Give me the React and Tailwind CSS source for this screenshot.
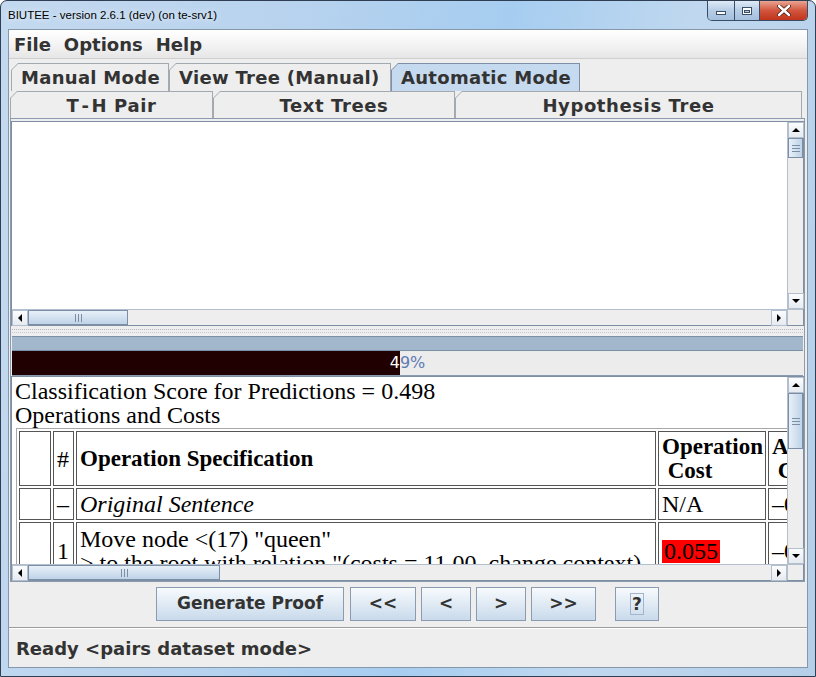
const UI = "font-['DejaVu_Sans',sans-serif]";
const SERIF = "font-['Liberation_Serif','Times_New_Roman',serif]";

const ARROWS = {
  up: { pts: "0,5 4,1 8,5", box: "0 0 8 6" },
  down: { pts: "0,1 4,5 8,1", box: "0 0 8 6" },
  left: { pts: "5,0 1,4 5,8", box: "0 0 6 8" },
  right: { pts: "1,0 5,4 1,8", box: "0 0 6 8" },
};

function ArrowBtn({ dir }) {
  const a = ARROWS[dir];
  const vert = dir === "up" || dir === "down";
  return (
    <div className="w-[16px] h-[16px] shrink-0 flex items-center justify-center bg-[linear-gradient(#fbfcfd,#e6ebf1)] border border-[#b3bfcc]">
      <svg width={vert ? 8 : 6} height={vert ? 6 : 8} viewBox={a.box}>
        <polygon points={a.pts} fill="#000" />
      </svg>
    </div>
  );
}

function VScroll({ thumb }) {
  return (
    <div className="w-[16px] shrink-0 flex flex-col bg-[#eeeeee] border-l border-[#b3bfcc]">
      <ArrowBtn dir="up" />
      <div className={`${thumb} shrink-0 border border-[#7c8ea6] bg-[linear-gradient(to_right,#e8f0f8,#bfd3e8)] flex flex-col items-center justify-center gap-[2px]`}>
        <div className="w-[8px] h-[1px] bg-[#7c8ea6]" />
        <div className="w-[8px] h-[1px] bg-[#7c8ea6]" />
        <div className="w-[8px] h-[1px] bg-[#7c8ea6]" />
      </div>
      <div className="flex-1" />
      <ArrowBtn dir="down" />
    </div>
  );
}

function HScroll({ thumb }) {
  return (
    <div className="h-[16px] shrink-0 flex bg-[#eeeeee] border-t border-[#b3bfcc]">
      <ArrowBtn dir="left" />
      <div className={`${thumb} shrink-0 border border-[#7c8ea6] bg-[linear-gradient(#e8f0f8,#bfd3e8)] flex items-center justify-center gap-[2px]`}>
        <div className="w-[1px] h-[8px] bg-[#7c8ea6]" />
        <div className="w-[1px] h-[8px] bg-[#7c8ea6]" />
        <div className="w-[1px] h-[8px] bg-[#7c8ea6]" />
      </div>
      <div className="flex-1" />
      <ArrowBtn dir="right" />
    </div>
  );
}

function Tab({ children, width, selected, center }) {
  return (
    <div
      className={`${width} h-full shrink-0 pt-[1px] px-[1px] ${
        selected ? "bg-[#7d8fa8]" : "bg-[#a4a9b0]"
      } [clip-path:polygon(7px_0,100%_0,100%_100%,0_100%,0_7px)]`}
    >
      <div
        className={`h-full flex items-center ${center ? "justify-center tracking-[0.6px]" : "pl-[9px] tracking-[0.3px]"} ${
          selected ? "bg-[#c6daef]" : "bg-[#eeeeee]"
        } [clip-path:polygon(6px_0,100%_0,100%_100%,0_100%,0_6px)] text-[18px] font-bold text-[#333333] whitespace-nowrap`}
      >
        {children}
      </div>
    </div>
  );
}

function Btn({ children, width, focus }) {
  return (
    <div
      className={`${width} h-[34px] shrink-0 flex items-center justify-center border border-[#8a9bb2] bg-[linear-gradient(#f7fafd,#c9daeb)] text-[17px] font-bold text-[#333333]`}
    >
      {focus ? (
        <span className="px-[1px] leading-[20px] border border-[#a3b4cc]">{children}</span>
      ) : (
        children
      )}
    </div>
  );
}

function TitleBar() {
  return (
    <div className="h-[28px] shrink-0 flex items-start justify-between">
      <div className="pl-[7px] pt-[6px] text-[11.5px] text-black font-['Liberation_Sans',Arial,sans-serif] [text-shadow:0_0_6px_#ffffff]">
        BIUTEE - version 2.6.1 (dev) (on te-srv1)
      </div>
      <div className="mr-[7px] flex h-[20px] border border-t-0 border-[#3b4d66] rounded-b-[5px] overflow-hidden">
        <div className="w-[27px] flex items-center justify-center bg-[linear-gradient(#dfeaf6,#b6cde6_50%,#a4c0de)] border-r border-[#3b4d66]">
          <div className="w-[10px] h-[4px] mt-[5px] bg-white border border-[#3b4d66]" />
        </div>
        <div className="w-[25px] flex items-center justify-center bg-[linear-gradient(#dfeaf6,#b6cde6_50%,#a4c0de)] border-r border-[#3b4d66]">
          <div className="w-[10px] h-[8px] border border-[#3b4d66] bg-white flex items-center justify-center">
            <div className="w-[6px] h-[3px] mt-[1px] bg-[#b6cde6] border border-[#3b4d66]" />
          </div>
        </div>
        <div className="w-[47px] flex items-center justify-center bg-[linear-gradient(#e8a592,#d2563e_50%,#c0341c)]">
          <svg width="14" height="11" viewBox="0 0 14 11">
            <path d="M2 1 L12 10 M12 1 L2 10" stroke="#4a1a10" strokeWidth="4" strokeLinecap="round" />
            <path d="M2 1 L12 10 M12 1 L2 10" stroke="#ffffff" strokeWidth="2.4" strokeLinecap="round" />
          </svg>
        </div>
      </div>
    </div>
  );
}

const cell = "border border-[#555555] px-[3px] align-middle";

function OpsTable() {
  return (
    <table className={`${SERIF} text-[24px] leading-[24px] text-black table-fixed border-separate border-spacing-[2px] border border-[#a8a8a8] w-[895px] ml-[4px] mt-[1px]`}>
      <colgroup>
        <col className="w-[32px]" />
        <col className="w-[21px]" />
        <col className="w-[580px]" />
        <col className="w-[108px]" />
        <col className="w-[140px]" />
      </colgroup>
      <tbody>
        <tr className="h-[55px]">
          <td className={cell}></td>
          <td className={`${cell} px-[2px]`}>#</td>
          <td className={`${cell} font-bold text-[23px]`}>Operation Specification</td>
          <td className={`${cell} font-bold text-[23px] whitespace-pre`}>{"Operation\n Cost"}</td>
          <td className={`${cell} font-bold text-[23px] whitespace-pre`}>{"Accumulated\n Cost"}</td>
        </tr>
        <tr className="h-[32px]">
          <td className={cell}></td>
          <td className={`${cell} px-[2px]`}>–</td>
          <td className={`${cell} italic`}>Original Sentence</td>
          <td className={cell}>N/A</td>
          <td className={cell}>–0.000</td>
        </tr>
        <tr className="h-[58px]">
          <td className={cell}></td>
          <td className={`${cell} px-[2px]`}>1</td>
          <td className={`${cell} whitespace-nowrap`}>
            Move node &lt;(17) "queen"
            <br />
            &gt; to the root with relation "(costs = 11.00, change context)
          </td>
          <td className={cell}>
            <span className="bg-[#ff0000] px-[2px] inline-block leading-[23px]">0.055</span>
          </td>
          <td className={cell}>–0.055</td>
        </tr>
      </tbody>
    </table>
  );
}

export default function App() {
  return (
    <div className={`${UI} w-[816px] h-[677px] flex flex-col border border-[#2f3e52] rounded-t-[7px] overflow-hidden bg-[linear-gradient(100deg,#c3d9ef_0%,#b9d3ee_30%,#a6cdf0_55%,#c0d8ef_75%,#b5cfe9_100%)]`}>
      <TitleBar />

      <div className="flex-1 min-h-0 mx-[7px] mb-[8px] border border-[#8797aa] bg-[#eeeeee] flex flex-col">
        {/* menu */}
        <div className="h-[29px] shrink-0 flex items-center gap-[13px] pl-[5px] border-b border-[#cfcfcf] bg-[linear-gradient(#ffffff,#f4f4f4_50%,#e6e6e6)] text-[18px] font-bold text-[#333333]">
          <span>File</span>
          <span>Options</span>
          <span>Help</span>
        </div>

        {/* tabs */}
        <div className="pt-[4px] shrink-0">
          <div className="h-[28px] flex pl-[2px]">
            <Tab width="w-[158px]">Manual Mode</Tab>
            <Tab width="w-[222px]">View Tree (Manual)</Tab>
            <Tab width="w-[189px]" selected>Automatic Mode</Tab>
          </div>
          <div className="h-[27px] flex pl-[1px]">
            <Tab width="w-[203px]" center>
              T<span className="px-[2px]">-</span>H Pair
            </Tab>
            <Tab width="w-[242px]" center>Text Trees</Tab>
            <Tab width="w-[347px]" center>Hypothesis Tree</Tab>
          </div>
        </div>

        {/* content panel */}
        <div className="h-[464px] shrink-0 ml-[1px] mr-[2px] border border-[#8a9bb0] flex flex-col overflow-hidden">
          <div className="mt-[2px] h-[205px] shrink-0 border border-[#7f8fa3] flex flex-col">
            <div className="flex-1 flex min-h-0">
              <div className="flex-1 bg-white" />
              <VScroll thumb="h-[20px]" />
            </div>
            <div className="flex">
              <div className="flex-1">
                <HScroll thumb="w-[100px]" />
              </div>
              <div className="w-[16px] h-[16px] bg-[#eeeeee] border-t border-l border-[#b3bfcc]" />
            </div>
          </div>

          {/* split divider */}
          <div className="h-[10px] shrink-0 flex flex-col justify-center gap-[2px] px-[1px]">
            <div className="border-t border-dotted border-[#b4b8bd]" />
            <div className="border-t border-dotted border-[#c4c8cc]" />
          </div>

          {/* progress */}
          <div className="h-[15px] shrink-0 mx-[1px] bg-[#a3b7cc] border-y border-[#7b8fa6]" />
          <div className="h-[25px] shrink-0 mx-[1px] relative bg-[#ececec] border-b border-[#8a9bb0] text-[16px] leading-[24px] text-[#5f7bb4]">
            <div className="text-center">49%</div>
            <div className="absolute left-0 top-0 bottom-0 w-[388px] overflow-hidden bg-[#200000]">
              <div className="w-[791px] text-center text-white">49%</div>
            </div>
          </div>

          {/* lower pane */}
          <div className="flex-1 min-h-0 border border-[#7f8fa3] flex flex-col">
            <div className="flex-1 flex min-h-0">
              <div className="flex-1 min-w-0 bg-white overflow-hidden">
                <div className={`${SERIF} text-[24px] leading-[24px] text-black pt-[2px] pl-[3px] whitespace-nowrap`}>
                  <div>Classification Score for Predictions = 0.498</div>
                  <div>Operations and Costs</div>
                </div>
                <OpsTable />
              </div>
              <VScroll thumb="h-[56px]" />
            </div>
            <div className="flex shrink-0">
              <div className="flex-1">
                <HScroll thumb="w-[192px]" />
              </div>
              <div className="w-[16px] h-[16px] bg-[#eeeeee] border-t border-l border-[#b3bfcc]" />
            </div>
          </div>
        </div>

        {/* buttons */}
        <div className="pt-[5px] shrink-0 flex pl-[147px]">
          <Btn width="w-[188px]">Generate Proof</Btn>
          <div className="w-[6px]" />
          <Btn width="w-[66px]">&lt;&lt;</Btn>
          <div className="w-[5px]" />
          <Btn width="w-[50px]">&lt;</Btn>
          <div className="w-[5px]" />
          <Btn width="w-[50px]">&gt;</Btn>
          <div className="w-[5px]" />
          <Btn width="w-[65px]">&gt;&gt;</Btn>
          <div className="w-[19px]" />
          <Btn width="w-[44px]" focus>?</Btn>
        </div>

        <div className="mt-[6px] shrink-0 border-t border-[#9c9c9c] border-b border-b-white" />

        {/* status */}
        <div className="flex-1 flex items-center pl-[7px] text-[18px] font-bold text-[#333333]">
          Ready &lt;pairs dataset mode&gt;
        </div>
      </div>
    </div>
  );
}
